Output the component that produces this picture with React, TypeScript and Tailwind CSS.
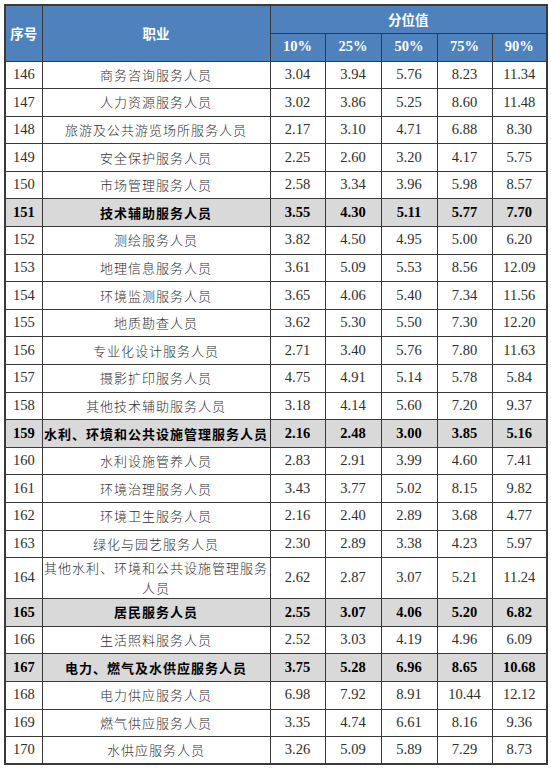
import React from "react";

type Row = {
  no: number;
  name: React.ReactNode;
  v: string[];
  bold?: boolean;
  tall?: boolean;
};

const rows: Row[] = [
  { no: 146, name: "商务咨询服务人员", v: ["3.04", "3.94", "5.76", "8.23", "11.34"] },
  { no: 147, name: "人力资源服务人员", v: ["3.02", "3.86", "5.25", "8.60", "11.48"] },
  { no: 148, name: "旅游及公共游览场所服务人员", v: ["2.17", "3.10", "4.71", "6.88", "8.30"] },
  { no: 149, name: "安全保护服务人员", v: ["2.25", "2.60", "3.20", "4.17", "5.75"] },
  { no: 150, name: "市场管理服务人员", v: ["2.58", "3.34", "3.96", "5.98", "8.57"] },
  { no: 151, name: "技术辅助服务人员", v: ["3.55", "4.30", "5.11", "5.77", "7.70"], bold: true },
  { no: 152, name: "测绘服务人员", v: ["3.82", "4.50", "4.95", "5.00", "6.20"] },
  { no: 153, name: "地理信息服务人员", v: ["3.61", "5.09", "5.53", "8.56", "12.09"] },
  { no: 154, name: "环境监测服务人员", v: ["3.65", "4.06", "5.40", "7.34", "11.56"] },
  { no: 155, name: "地质勘查人员", v: ["3.62", "5.30", "5.50", "7.30", "12.20"] },
  { no: 156, name: "专业化设计服务人员", v: ["2.71", "3.40", "5.76", "7.80", "11.63"] },
  { no: 157, name: "摄影扩印服务人员", v: ["4.75", "4.91", "5.14", "5.78", "5.84"] },
  { no: 158, name: "其他技术辅助服务人员", v: ["3.18", "4.14", "5.60", "7.20", "9.37"] },
  { no: 159, name: "水利、环境和公共设施管理服务人员", v: ["2.16", "2.48", "3.00", "3.85", "5.16"], bold: true },
  { no: 160, name: "水利设施管养人员", v: ["2.83", "2.91", "3.99", "4.60", "7.41"] },
  { no: 161, name: "环境治理服务人员", v: ["3.43", "3.77", "5.02", "8.15", "9.82"] },
  { no: 162, name: "环境卫生服务人员", v: ["2.16", "2.40", "2.89", "3.68", "4.77"] },
  { no: 163, name: "绿化与园艺服务人员", v: ["2.30", "2.89", "3.38", "4.23", "5.97"] },
  {
    no: 164,
    name: (
      <>
        其他水利、环境和公共设施管理服务
        <br />
        人员
      </>
    ),
    v: ["2.62", "2.87", "3.07", "5.21", "11.24"],
    tall: true,
  },
  { no: 165, name: "居民服务人员", v: ["2.55", "3.07", "4.06", "5.20", "6.82"], bold: true },
  { no: 166, name: "生活照料服务人员", v: ["2.52", "3.03", "4.19", "4.96", "6.09"] },
  { no: 167, name: "电力、燃气及水供应服务人员", v: ["3.75", "5.28", "6.96", "8.65", "10.68"], bold: true },
  { no: 168, name: "电力供应服务人员", v: ["6.98", "7.92", "8.91", "10.44", "12.12"] },
  { no: 169, name: "燃气供应服务人员", v: ["3.35", "4.74", "6.61", "8.16", "9.36"] },
  { no: 170, name: "水供应服务人员", v: ["3.26", "5.09", "5.89", "7.29", "8.73"] },
];

const serif = "font-['Liberation_Serif','Times_New_Roman',serif]";
const cjk = "font-['Noto_Sans_CJK_SC','Noto_Sans',sans-serif]";
const cell = "border border-[#3a3a3a] text-center align-middle p-0";

export default function App() {
  return (
    <div className="w-[551px] h-[770px] bg-white pt-[4px] pl-[4px]">
      <table className="border-collapse table-fixed w-[542px] border-2 border-[#3a3a3a]">
        <colgroup>
          <col className="w-[37px]" />
          <col className="w-[228px]" />
          <col className="w-[55px]" />
          <col className="w-[56px]" />
          <col className="w-[56px]" />
          <col className="w-[55px]" />
          <col className="w-[55px]" />
        </colgroup>
        <thead>
          <tr className="h-[28px] bg-[#4f81bd] text-white">
            <th rowSpan={2} className={`${cell} ${cjk} text-[13.5px] font-bold`}>
              序号
            </th>
            <th rowSpan={2} className={`${cell} ${cjk} text-[13.5px] font-bold`}>
              职业
            </th>
            <th colSpan={5} className={`${cell} ${cjk} text-[13.5px] font-bold`}>
              分位值
            </th>
          </tr>
          <tr className="h-[28px] bg-[#4f81bd] text-white">
            {["10%", "25%", "50%", "75%", "90%"].map((p) => (
              <th key={p} className={`${cell} ${serif} text-[14.5px] font-bold`}>
                {p}
              </th>
            ))}
          </tr>
        </thead>
        <tbody>
          {rows.map((r) => (
            <tr
              key={r.no}
              className={`${r.tall ? "h-[40px]" : "h-[27.6px]"} ${
                r.bold ? "bg-[#d9d9d9] text-black font-bold" : "bg-white text-[#2e2e2e]"
              }`}
            >
              <td className={`${cell} ${serif} text-[14.5px]`}>{r.no}</td>
              <td
                className={`${cell} ${cjk} text-[13px] tracking-[1px] leading-[20px] whitespace-nowrap ${
                  r.bold ? "font-bold" : "font-light"
                }`}
              >
                {r.name}
              </td>
              {r.v.map((x, i) => (
                <td key={i} className={`${cell} ${serif} text-[14.5px]`}>
                  {x}
                </td>
              ))}
            </tr>
          ))}
        </tbody>
      </table>
    </div>
  );
}
